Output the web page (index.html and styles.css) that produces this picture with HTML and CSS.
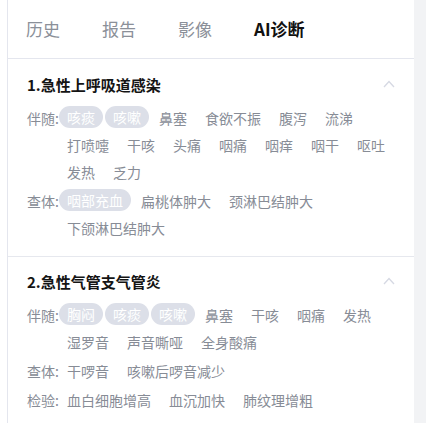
FILE: index.html
```html
<!DOCTYPE html>
<html lang="zh">
<head>
<meta charset="utf-8">
<link rel="stylesheet" href="styles.css">
</head>
<body>
<div class="page">
  <div class="panel">
    <div class="tabs">
      <span class="tab">历史</span>
      <span class="tab">报告</span>
      <span class="tab">影像</span>
      <span class="tab active">AI诊断</span>
    </div>

    <div class="section first">
      <div class="title-row">
        <span class="title">1.急性上呼吸道感染</span>
        <svg class="chev" width="12" height="8" viewBox="0 0 12 8"><polyline points="1,7 6,1.5 11,7" fill="none" stroke="#d6d9e3" stroke-width="1.3"/></svg>
      </div>
      <div class="row">
        <span class="label">伴随:</span>
        <div class="items">
          <span class="item pill">咳痰</span><span class="item pill">咳嗽</span><span class="item">鼻塞</span><span class="item">食欲不振</span><span class="item">腹泻</span><span class="item">流涕</span><span class="item">打喷嚏</span><span class="item">干咳</span><span class="item">头痛</span><span class="item">咽痛</span><span class="item">咽痒</span><span class="item">咽干</span><span class="item">呕吐</span><span class="item">发热</span><span class="item">乏力</span>
        </div>
      </div>
      <div class="row">
        <span class="label">查体:</span>
        <div class="items">
          <span class="item pill">咽部充血</span><span class="item">扁桃体肿大</span><span class="item">颈淋巴结肿大</span><span class="item">下颌淋巴结肿大</span>
        </div>
      </div>
    </div>

    <div class="section">
      <div class="title-row">
        <span class="title">2.急性气管支气管炎</span>
        <svg class="chev" width="12" height="8" viewBox="0 0 12 8"><polyline points="1,7 6,1.5 11,7" fill="none" stroke="#d6d9e3" stroke-width="1.3"/></svg>
      </div>
      <div class="row">
        <span class="label">伴随:</span>
        <div class="items">
          <span class="item pill">胸闷</span><span class="item pill">咳痰</span><span class="item pill">咳嗽</span><span class="item">鼻塞</span><span class="item">干咳</span><span class="item">咽痛</span><span class="item">发热</span><span class="item">湿罗音</span><span class="item">声音嘶哑</span><span class="item">全身酸痛</span>
        </div>
      </div>
      <div class="row">
        <span class="label">查体:</span>
        <div class="items">
          <span class="item">干啰音</span><span class="item">咳嗽后啰音减少</span>
        </div>
      </div>
      <div class="row">
        <span class="label">检验:</span>
        <div class="items">
          <span class="item">血白细胞增高</span><span class="item">血沉加快</span><span class="item">肺纹理增粗</span>
        </div>
      </div>
    </div>
  </div>
  <div class="rail"></div>
</div>
</body>
</html>
```

FILE: styles.css
```css
* { box-sizing: border-box; }
html, body {
  margin: 0;
  padding: 0;
  background: #ffffff;
  font-family: "Noto Sans CJK SC", "Noto Sans", sans-serif;
}
.page {
  display: flex;
  min-height: 423px;
  padding-left: 7px;
}
.panel {
  width: 407px;
  flex-shrink: 0;
  border-left: 1px solid #e4e6ee;
  background: #fff;
}
.rail {
  flex: 1;
  background: #f2f3f5;
}
.tabs {
  height: 59px;
  display: flex;
  align-items: center;
  gap: 42px;
  padding-left: 18px;
  border-bottom: 1px solid #e4e6ee;
}
.tab {
  font-size: 17px;
  line-height: 24px;
  color: #8b9099;
}
.tab.active {
  color: #111;
  font-weight: 700;
}
.section {
  padding: 14px 16px 14px 19px;
  border-bottom: 1px solid #e6e8ee;
}
.section.first {
  padding-top: 15px;
}
.title-row {
  display: flex;
  align-items: center;
  justify-content: space-between;
  height: 20px;
  margin-bottom: 11px;
}
.title {
  font-size: 15px;
  font-weight: 700;
  color: #141414;
}
.chev {
  margin-right: 3px;
}
.row {
  display: flex;
  align-items: flex-start;
  font-size: 14px;
  line-height: 27px;
  color: #878c96;
}
.row + .row {
  margin-top: 2px;
}
.label {
  flex-shrink: 0;
  white-space: nowrap;
}
.items {
  flex: 1;
  display: flex;
  flex-wrap: wrap;
  column-gap: 2px;
}
.item {
  padding: 0 8px;
  white-space: nowrap;
}
.pill {
  background: #dcdfe8;
  color: #fff;
  border-radius: 11px;
  height: 22px;
  line-height: 22px;
  margin: 1px 0 2px;
}
```
